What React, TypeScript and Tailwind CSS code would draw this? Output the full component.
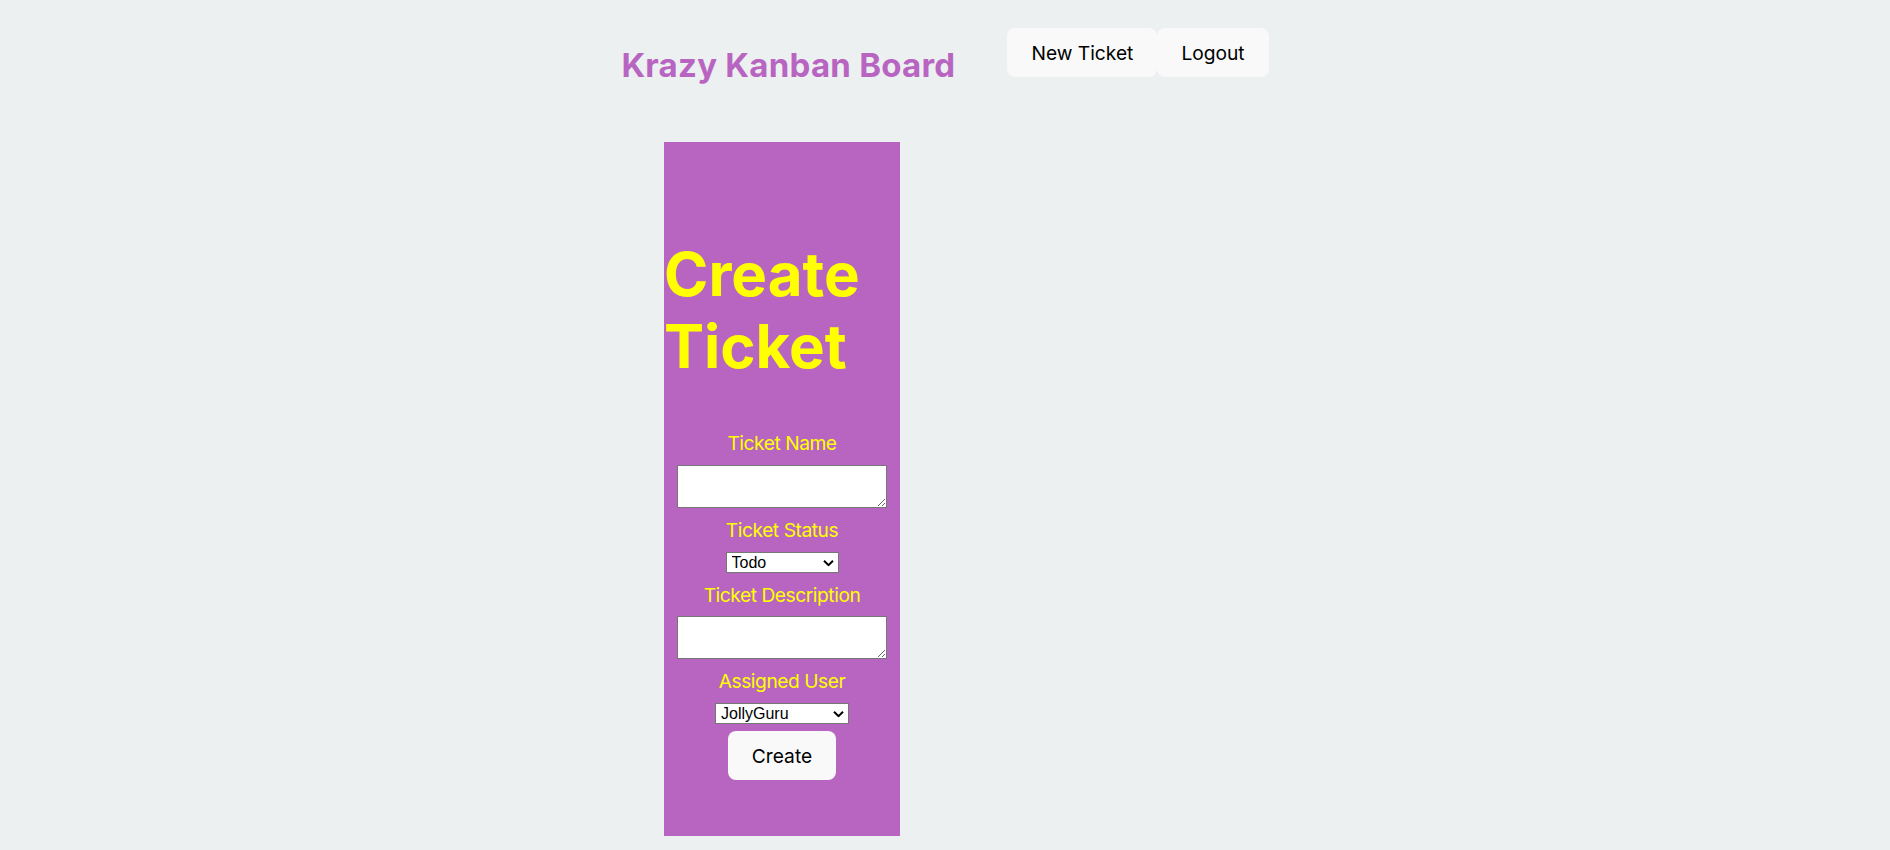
import React from "react";

const Label = ({ children }: { children: React.ReactNode }) => (
  <label className="text-[19.2px] leading-[24px] tracking-[-0.45px] text-[#ffff00]">{children}</label>
);

const NavButton = ({ children }: { children: React.ReactNode }) => (
  <button className="rounded-[8px] border border-transparent bg-[#f9f9f9] px-[23px] py-[11.5px] text-[19.2px] font-normal leading-[24px] text-black">
    {children}
  </button>
);

const Chevron = () => (
  <svg
    width="11"
    height="7"
    viewBox="0 0 11 7"
    className="pointer-events-none absolute right-[5px] top-1/2 -translate-y-1/2"
  >
    <path d="M1 1.2 L5.5 5.6 L10 1.2" fill="none" stroke="#000" strokeWidth="2" />
  </svg>
);

const Select = ({ width, value, options }: { width: string; value: string; options: string[] }) => (
  <div className={`relative ${width}`}>
    <select
      defaultValue={value}
      className="block h-[21px] w-full appearance-none border border-[#767676] bg-white pl-[5px] font-['Liberation_Sans',Arial,sans-serif] text-[16px] leading-[18px] text-black"
    >
      {options.map((o) => (
        <option key={o}>{o}</option>
      ))}
    </select>
    <Chevron />
  </div>
);

export default function App() {
  return (
    <div className="min-h-screen bg-[#ecf0f1] font-['Inter',sans-serif]">
      <nav className="flex justify-center pt-[28px]">
        <h2 className="mr-[52px] mt-[13px] text-[33px] font-bold leading-[48px] tracking-[0.25px] text-[#b865c2]">
          Krazy Kanban Board
        </h2>
        <div className="flex self-start">
          <NavButton>New Ticket</NavButton>
          <NavButton>Logout</NavButton>
        </div>
      </nav>

      <div className="ml-[664px] mt-[53px] flex w-[236px] flex-col bg-[#b865c2] pb-[56px] pt-[96px]">
        <h1 className="text-left text-[60px] font-bold leading-[72px] text-[#ffff00]">
          Create Ticket
        </h1>

        <form className="mt-[49px] flex flex-col items-center gap-[10px]">
          <Label>Ticket Name</Label>
          <textarea className="h-[43px] w-[210px] border border-[#767676] bg-white" />
          <Label>Ticket Status</Label>
          <Select width="w-[113px]" value="Todo" options={["Todo", "In Progress", "Done"]} />
          <Label>Ticket Description</Label>
          <textarea className="-mt-[1px] h-[43px] w-[210px] border border-[#767676] bg-white" />
          <Label>Assigned User</Label>
          <Select width="w-[134px]" value="JollyGuru" options={["JollyGuru", "SunnyScribe", "RadiantComet"]} />
          <button
            type="button"
            className="-mt-[3px] rounded-[8px] border border-transparent bg-[#f9f9f9] px-[23px] py-[11.5px] text-[19.2px] font-normal leading-[24px] text-black"
          >
            Create
          </button>
        </form>
      </div>
    </div>
  );
}
